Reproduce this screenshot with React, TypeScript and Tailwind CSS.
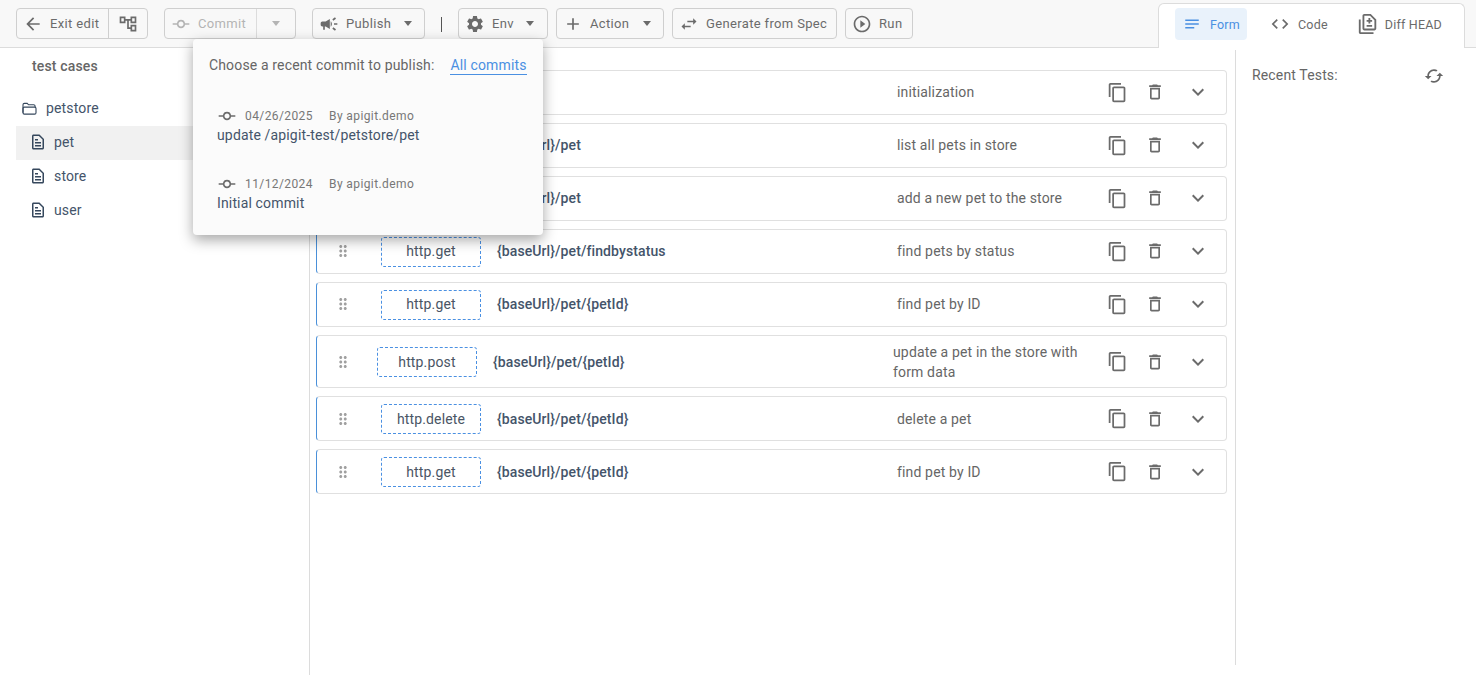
import type { ReactNode } from "react";

const icons = {
  back: "M20 11H7.83l5.59-5.59L12 4l-8 8 8 8 1.41-1.41L7.83 13H20v-2z",
  tree: "M22 11V3h-7v3H9V3H2v8h7V8h2v10h4v3h7v-8h-7v3h-2V8h2v3h7zM7 9H4V5h3v4zm10 6h3v4h-3v-4zm0-10h3v4h-3V5z",
  commit: "M16.9 11a5 5 0 0 0-9.8 0H2v2h5.1a5 5 0 0 0 9.8 0H22v-2h-5.1zM12 15c-1.66 0-3-1.34-3-3s1.34-3 3-3 3 1.34 3 3-1.34 3-3 3z",
  campaign: "M18 11v2h4v-2h-4zm-2 6.61c.96.71 2.21 1.65 3.2 2.39.4-.53.8-1.07 1.2-1.6-.99-.74-2.24-1.68-3.2-2.4-.4.54-.8 1.08-1.2 1.61zM20.4 5.6c-.4-.53-.8-1.07-1.2-1.6-.99.74-2.24 1.68-3.2 2.4.4.53.8 1.07 1.2 1.6.96-.72 2.21-1.65 3.2-2.4zM4 9c-1.1 0-2 .9-2 2v2c0 1.1.9 2 2 2h1v4h2v-4h1l5 3V6L8 9H4zm11.5 3c0-1.33-.58-2.53-1.5-3.35v6.69c.92-.81 1.5-2.01 1.5-3.34z",
  settings: "M19.14 12.94c.04-.3.06-.61.06-.94 0-.32-.02-.64-.07-.94l2.03-1.58c.18-.14.23-.41.12-.61l-1.92-3.32c-.12-.22-.37-.29-.59-.22l-2.39.96c-.5-.38-1.03-.7-1.62-.94l-.36-2.54c-.04-.24-.24-.41-.48-.41h-3.84c-.24 0-.43.17-.47.41l-.36 2.54c-.59.24-1.13.57-1.62.94l-2.39-.96c-.22-.08-.47 0-.59.22L2.74 8.87c-.12.21-.08.47.12.61l2.03 1.58c-.05.3-.09.63-.09.94s.02.64.07.94l-2.03 1.58c-.18.14-.23.41-.12.61l1.92 3.32c.12.22.37.29.59.22l2.39-.96c.5.38 1.03.7 1.62.94l.36 2.54c.05.24.24.41.48.41h3.84c.24 0 .44-.17.47-.41l.36-2.54c.59-.24 1.13-.56 1.62-.94l2.39.96c.22.08.47 0 .59-.22l1.92-3.32c.12-.22.07-.47-.12-.61l-2.01-1.58zM12 15.6c-1.98 0-3.6-1.62-3.6-3.6s1.62-3.6 3.6-3.6 3.6 1.62 3.6 3.6-1.62 3.6-3.6 3.6z",
  add: "M19 13h-6v6h-2v-6H5v-2h6V5h2v6h6v2z",
  swap: "M6.99 11 3 15l3.99 4v-3H14v-2H6.99v-3zM21 9l-3.99-4v3H10v2h7.01v3L21 9z",
  play: "M10 16.5l6-4.5-6-4.5v9zM12 2C6.48 2 2 6.48 2 12s4.48 10 10 10 10-4.48 10-10S17.52 2 12 2zm0 18c-4.41 0-8-3.59-8-8s3.59-8 8-8 8 3.59 8 8-3.59 8-8 8z",
  notes: "M3 18h12v-2H3v2zM3 6v2h18V6H3zm0 7h18v-2H3v2z",
  code: "M9.4 16.6 4.8 12l4.6-4.6L8 6l-6 6 6 6 1.4-1.4zm5.2 0 4.6-4.6-4.6-4.6L16 6l6 6-6 6-1.4-1.4z",
  diff: "M18 23H4c-1.1 0-2-.9-2-2V7h2v14h14v2zM15 1H8c-1.1 0-1.99.9-1.99 2L6 17c0 1.1.89 2 1.99 2H19c1.1 0 2-.9 2-2V7l-6-6zm4 16H8V3h6.17L19 7.83V17zM12.5 5.5h2v2h2v2h-2v2h-2v-2h-2v-2h2zM10.5 13h6v2h-6z",
  file: "M8 16h8v2H8zm0-4h8v2H8zm0-4h4v2H8zm6-6H6c-1.1 0-2 .9-2 2v16c0 1.1.89 2 1.99 2H18c1.1 0 2-.9 2-2V8l-6-6zm4 18H6V4h7.17L18 8.83V20z",
  copy: "M16 1H4c-1.1 0-2 .9-2 2v14h2V3h12V1zm3 4H8c-1.1 0-2 .9-2 2v14c0 1.1.9 2 2 2h11c1.1 0 2-.9 2-2V7c0-1.1-.9-2-2-2zm0 16H8V7h11v14z",
  trash: "M6 19c0 1.1.9 2 2 2h8c1.1 0 2-.9 2-2V7H6v12zM8 9h8v10H8V9zm7.5-5-1-1h-5l-1 1H5v2h14V4h-3.5z",
  chevron: "M16.59 8.59 12 13.17 7.41 8.59 6 10l6 6 6-6z",
  drag: "M11 18c0 1.1-.9 2-2 2s-2-.9-2-2 .9-2 2-2 2 .9 2 2zm-2-8c-1.1 0-2 .9-2 2s.9 2 2 2 2-.9 2-2-.9-2-2-2zm0-6c-1.1 0-2 .9-2 2s.9 2 2 2 2-.9 2-2-.9-2-2-2zm6 4c1.1 0 2-.9 2-2s-.9-2-2-2-2 .9-2 2 .9 2 2 2zm0 2c-1.1 0-2 .9-2 2s.9 2 2 2 2-.9 2-2-.9-2-2-2zm0 6c-1.1 0-2 .9-2 2s.9 2 2 2 2-.9 2-2-.9-2-2-2z",
  cached: "M19 8l-4 4h3c0 3.31-2.69 6-6 6-1.01 0-1.97-.25-2.8-.7l-1.46 1.46C8.97 19.54 10.43 20 12 20c4.42 0 8-3.58 8-8h3l-4-4zM6 12c0-3.31 2.69-6 6-6 1.01 0 1.97.25 2.8.7l1.46-1.46C15.03 4.46 13.57 4 12 4c-4.42 0-8 3.58-8 8H1l4 4 4-4H6z",
};

function Icon({ name, className }: { name: keyof typeof icons; className: string }) {
  return (
    <svg viewBox="0 0 24 24" fill="currentColor" className={`shrink-0 ${className}`}>
      <path d={icons[name]} />
    </svg>
  );
}

function Caret({ className = "text-[#666]" }: { className?: string }) {
  return (
    <svg viewBox="0 0 10 5" fill="currentColor" className={`h-[5px] w-[10px] shrink-0 ${className}`}>
      <path d="M1 0h8L5 5z" />
    </svg>
  );
}

function ToolButton({ className, children }: { className: string; children: ReactNode }) {
  return (
    <div
      className={`flex h-[31px] shrink-0 items-center rounded border border-[#cfcfcf] text-[13px] tracking-[0.35px] text-[#6b6b6b] ${className}`}
    >
      {children}
    </div>
  );
}

function Label({ children }: { children: ReactNode }) {
  return <span className="ml-[7px] pt-px">{children}</span>;
}

function Toolbar() {
  return (
    <div className="flex h-[48px] items-start border-b border-[#dcdcdc] bg-[#f8f8f8] pl-4 pt-2">
      <ToolButton className="w-[132px]">
        <div className="flex h-full w-[92px] items-center border-r border-[#cfcfcf] pl-[6px]">
          <Icon name="back" className="size-[20px]" />
          <Label>Exit edit</Label>
        </div>
        <div className="flex flex-1 items-center justify-center">
          <Icon name="tree" className="size-[20px]" />
        </div>
      </ToolButton>

      <ToolButton className="ml-4 w-[132px] text-[#b4b4b4]">
        <div className="flex h-full w-[92px] items-center border-r border-[#dcdcdc] pl-[6px]">
          <Icon name="commit" className="size-[20px] text-[#b4b4b4]" />
          <Label>Commit</Label>
        </div>
        <div className="flex flex-1 items-center justify-center">
          <Caret className="text-[#b4b4b4]" />
        </div>
      </ToolButton>

      <ToolButton className="ml-4 w-[113px] pl-[6px] pr-[11px]">
        <Icon name="campaign" className="size-[20px]" />
        <Label>Publish</Label>
        <Caret className="ml-auto" />
      </ToolButton>

      <div className="ml-4 mt-[9px] h-[15px] w-px shrink-0 bg-[#555]" />

      <ToolButton className="ml-4 w-[90px] pl-[6px] pr-[12px]">
        <Icon name="settings" className="size-[20px]" />
        <Label>Env</Label>
        <Caret className="ml-auto" />
      </ToolButton>

      <ToolButton className="ml-2 w-[108px] pl-[6px] pr-[11px]">
        <Icon name="add" className="size-[20px]" />
        <Label>Action</Label>
        <Caret className="ml-auto" />
      </ToolButton>

      <ToolButton className="ml-2 w-[165px] pl-[6px]">
        <Icon name="swap" className="size-[20px]" />
        <Label>Generate from Spec</Label>
      </ToolButton>

      <ToolButton className="ml-2 w-[68px] pl-[6px]">
        <Icon name="play" className="size-[20px]" />
        <Label>Run</Label>
      </ToolButton>

      <div className="ml-auto mr-[11px] -mt-[5px] flex h-[45px] w-[307px] shrink-0 items-start rounded-t-md border border-b-0 border-[#dcdcdc] bg-white pl-4 pt-[4px] text-[12.5px] tracking-[0.2px] text-[#6b6b6b]">
        <div className="flex h-[32px] w-[72px] items-center rounded bg-[#e9f2fb] pl-[8px] text-[#4a90e2]">
          <Icon name="notes" className="size-[18px]" />
          <span className="ml-[9px] pt-[2px]">Form</span>
        </div>
        <div className="ml-[23px] flex h-[32px] items-center">
          <Icon name="code" className="size-[20px]" />
          <span className="ml-[8px] pt-[2px]">Code</span>
        </div>
        <div className="ml-[29px] flex h-[32px] items-center">
          <Icon name="diff" className="size-[22px]" />
          <span className="ml-[6px] pt-[2px]">Diff HEAD</span>
        </div>
      </div>
    </div>
  );
}

function FileRow({ label, active }: { label: string; active?: boolean }) {
  return (
    <div className={`ml-4 flex h-[34px] items-center pb-[2px] pl-[13px] ${active ? "bg-[#f1f1f1]" : ""}`}>
      <Icon name="file" className="size-[18px] text-[#35475c]" />
      <span className="ml-[7px] text-sm tracking-[0.15px] text-[#44546a]">{label}</span>
    </div>
  );
}

function Sidebar() {
  return (
    <div className="w-[310px] shrink-0 border-r border-[#dcdcdc] pt-[9px]">
      <div className="pl-8 text-sm font-medium leading-[18px] tracking-[0.15px] text-[#666]">test cases</div>
      <div className="mb-px mt-[16px] flex h-[34px] items-center pl-[22px]">
        <svg viewBox="0 0 16 14" fill="none" stroke="#35475c" strokeWidth="1.2" className="h-[13px] w-[15px] shrink-0">
          <path d="M1 11.5V3a1.5 1.5 0 0 1 1.5-1.5h3l1.5 1.5h5.5A1.5 1.5 0 0 1 14 4.5v1" />
          <path d="M1 7a1.5 1.5 0 0 1 1.5-1.5h11A1.5 1.5 0 0 1 15 7v4.5a1.5 1.5 0 0 1-1.5 1.5h-11A1.5 1.5 0 0 1 1 11.5z" />
        </svg>
        <span className="ml-[9px] text-sm tracking-[0.15px] text-[#44546a]">petstore</span>
      </div>
      <FileRow label="pet" active />
      <FileRow label="store" />
      <FileRow label="user" />
    </div>
  );
}

type Case = { method?: string; url?: string; desc: string; wide?: boolean };

const cases: Case[] = [
  { desc: "initialization" },
  { method: "http.get", url: "{baseUrl}/pet", desc: "list all pets in store" },
  { method: "http.post", url: "{baseUrl}/pet", desc: "add a new pet to the store" },
  { method: "http.get", url: "{baseUrl}/pet/findbystatus", desc: "find pets by status" },
  { method: "http.get", url: "{baseUrl}/pet/{petId}", desc: "find pet by ID" },
  { method: "http.post", url: "{baseUrl}/pet/{petId}", desc: "update a pet in the store with form data", wide: true },
  { method: "http.delete", url: "{baseUrl}/pet/{petId}", desc: "delete a pet" },
  { method: "http.get", url: "{baseUrl}/pet/{petId}", desc: "find pet by ID" },
];

function CaseRow({ item }: { item: Case }) {
  return (
    <div
      className={`flex items-center rounded border border-[#e0e0e0] border-l-[#4a90d9] tracking-[0.15px] ${
        item.wide ? "h-[53.5px] pt-px" : "h-[45px]"
      }`}
    >
      <Icon name="drag" className="ml-[17px] size-[18px] text-[#a0a0a0]" />
      <div className={`${item.wide ? "ml-[25px]" : "ml-[29px]"} mt-px flex w-[100px] shrink-0 justify-center`}>
        {item.method && (
          <div className="flex h-[30px] w-full items-center justify-center rounded-[3px] border border-dashed border-[#4a90e2] pb-px text-sm text-[#4a5565]">
            {item.method}
          </div>
        )}
      </div>
      <div className="ml-4 w-[400px] shrink-0 text-sm font-medium tracking-[0.1px] text-[#44546a]">{item.url}</div>
      <div className={`shrink-0 text-sm leading-5 text-[#666] ${item.wide ? "w-[190px]" : "w-[186px]"}`}>{item.desc}</div>
      <Icon name="copy" className="ml-[24px] size-[21px] text-[#6b6b6b]" />
      <Icon name="trash" className="ml-[17px] size-[20px] text-[#6b6b6b]" />
      <Icon name="chevron" className="ml-[21px] size-[24px] text-[#6b6b6b]" />
    </div>
  );
}

function Commit({ date, message, className }: { date: string; message: string; className: string }) {
  return (
    <div className={className}>
      <div className="flex h-[20px] items-center text-xs tracking-[0.4px] text-[#777]">
        <Icon name="commit" className="size-[20px] text-[#6b6b6b]" />
        <span className="ml-[8px] w-[84px]">{date}</span>
        <span>By apigit.demo</span>
      </div>
      <div className="text-sm leading-[18px] tracking-[0.15px] text-[#44546a]">{message}</div>
    </div>
  );
}

function PublishPopover() {
  return (
    <div className="absolute left-[193px] top-[39px] z-10 h-[196px] w-[350px] rounded bg-[#fbfbfb] shadow-[0_5px_14px_rgba(0,0,0,0.35)]">
      <div className="flex pl-4 pt-[17px] text-sm leading-[18px] tracking-[0.15px] text-[#666]">
        <span>Choose a recent commit to publish:</span>
        <span className="ml-4 border-b border-[#4a90e2] text-[#4a90e2]">All commits</span>
      </div>
      <Commit className="ml-6 mt-[31px]" date="04/26/2025" message="update /apigit-test/petstore/pet" />
      <Commit className="ml-6 mt-[30px]" date="11/12/2024" message="Initial commit" />
    </div>
  );
}

export default function App() {
  return (
    <div className="relative flex h-[675px] w-[1476px] flex-col overflow-hidden bg-white font-['Roboto',sans-serif]">
      <Toolbar />
      <div className="flex flex-1">
        <Sidebar />
        <div className="flex w-[925px] shrink-0 flex-col gap-2 pl-[6px] pr-[8px] pt-[21.6px]">
          {cases.map((item, i) => (
            <CaseRow key={i} item={item} />
          ))}
        </div>
        <div className="mb-[10px] mt-[2px] flex h-[615px] flex-1 items-start justify-between border-l border-[#dcdcdc] pl-4 pr-[32px] pt-4">
          <span className="text-sm leading-[18px] tracking-[0.15px] text-[#666]">Recent Tests:</span>
          <Icon name="cached" className="size-[20px] text-[#666]" />
        </div>
      </div>
      <PublishPopover />
    </div>
  );
}
